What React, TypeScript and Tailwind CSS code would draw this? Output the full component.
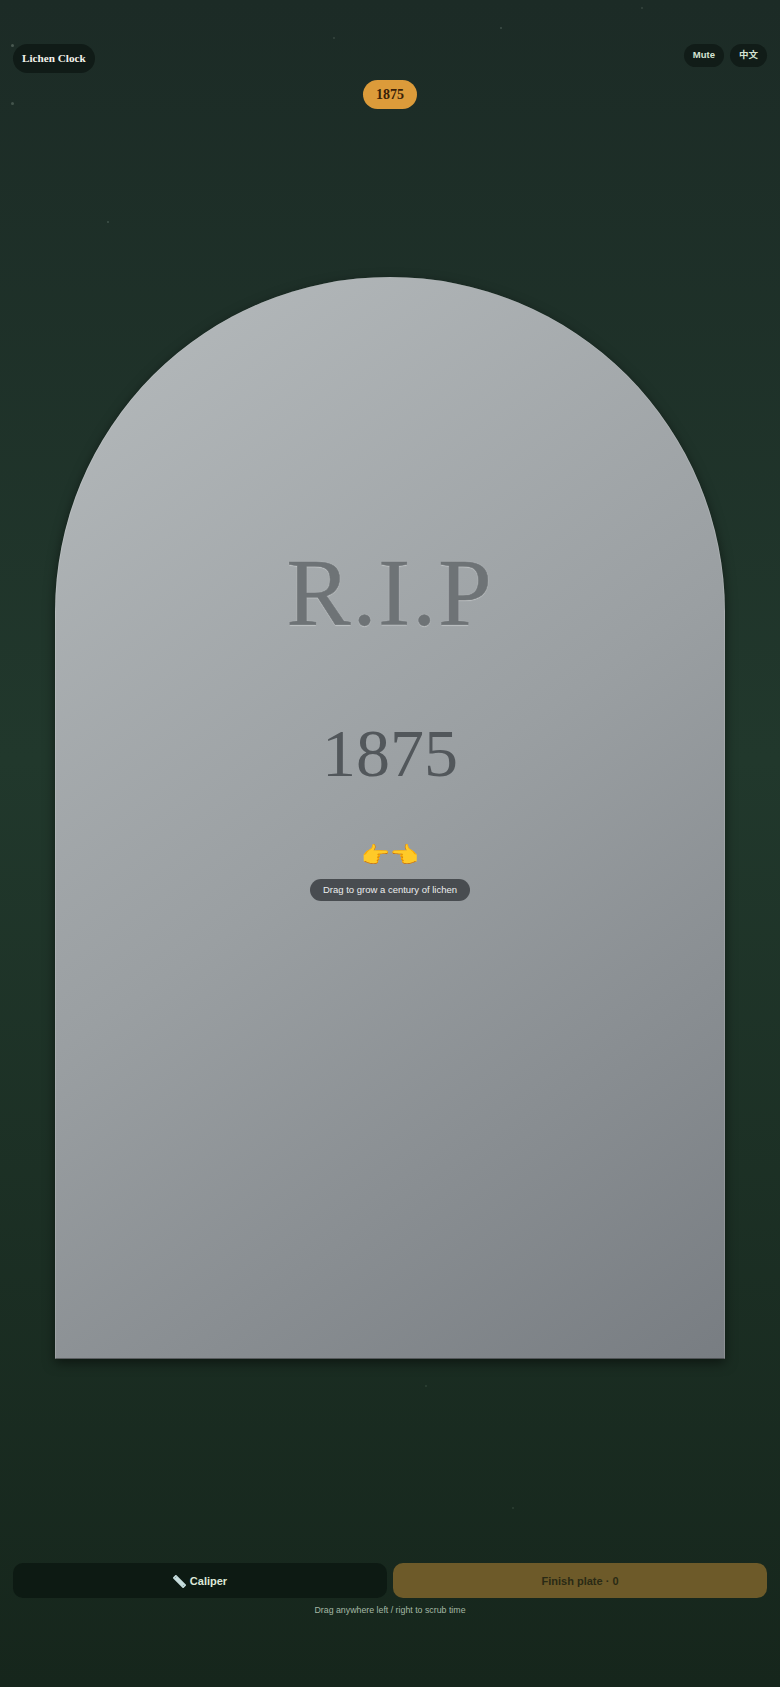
const specks = [
  { x: 11, y: 44, s: 3, o: 0.25 },
  { x: 11, y: 102, s: 3, o: 0.22 },
  { x: 107, y: 221, s: 2, o: 0.2 },
  { x: 333, y: 37, s: 2, o: 0.15 },
  { x: 500, y: 27, s: 2, o: 0.2 },
  { x: 641, y: 7, s: 2, o: 0.15 },
  { x: 425, y: 1385, s: 2, o: 0.12 },
  { x: 512, y: 1507, s: 2, o: 0.12 },
];

export default function App() {
  return (
    <div className="relative flex h-[1687px] w-[780px] flex-col overflow-hidden bg-[linear-gradient(180deg,#1c2b26_0%,#21382c_45%,#16261c_100%)] font-['Liberation_Sans',sans-serif]">
      {specks.map((d) => (
        <span
          key={`${d.x}-${d.y}`}
          className="absolute rounded-full bg-[#cfe0d0]"
          style={{ left: d.x, top: d.y, width: d.s, height: d.s, opacity: d.o }}
        />
      ))}

      <header className="flex items-start justify-between px-[13px] pt-[44px]">
        <div className="flex h-[29px] items-center rounded-full bg-[#101b17] px-[9px] font-['Liberation_Serif',serif] text-[11.2px] font-bold text-[#f2f2ea]">
          Lichen Clock
        </div>
        <div className="flex gap-[6px]">
          <button className="flex h-[23px] items-center rounded-full bg-[#111c18] px-[9px] text-[9.5px] font-bold text-[#d5e3d3]">
            Mute
          </button>
          <button className="flex h-[23px] items-center rounded-full bg-[#111c18] px-[9px] font-['Liberation_Sans','Noto_Sans_CJK_SC',sans-serif] text-[9.5px] font-bold text-[#d5e3d3]">
            中文
          </button>
        </div>
      </header>

      <div className="mt-[7px] flex justify-center">
        <div className="flex h-[29px] w-[54px] items-center justify-center rounded-full bg-[#dc9b3a] font-['Liberation_Serif',serif] text-[14px] font-bold text-[#3a2208]">
          1875
        </div>
      </div>

      <main className="mx-[55px] mt-[168px] flex h-[1082px] flex-col items-center rounded-t-[335px] bg-[linear-gradient(145deg,#b6bbbd_0%,#9a9fa2_50%,#787d82_100%)] shadow-[0_4px_12px_rgba(0,0,0,0.5),inset_1px_0_0_rgba(255,255,255,0.15),inset_-1px_0_0_rgba(255,255,255,0.15),inset_0_-1px_0_rgba(0,0,0,0.35)]">
        <div className="mt-[261px] font-['Liberation_Serif',serif] text-[96px] leading-[110px] tracking-[0.02em] text-[#6e7376] [-webkit-text-stroke:0.5px_#6e7376] [text-shadow:0_1px_1px_rgba(255,255,255,0.35),0_0_2px_rgba(255,255,255,0.25)]">
          R.I.P
        </div>
        <div className="mt-[66px] font-['Liberation_Serif',serif] text-[68px] leading-[78px] text-[#52575b]">
          1875
        </div>
        <div className="mt-[49px] font-['Noto_Color_Emoji',sans-serif] text-[23px] leading-[30px]">
          👉👈
        </div>
        <div className="mt-[8px] flex h-[22px] items-center rounded-full bg-[#484c50] px-[12.5px] text-[9.5px] text-[#eceeee]">
          Drag to grow a century of lichen
        </div>
      </main>

      <footer className="mt-[204px] flex flex-col px-[13px]">
        <div className="flex gap-[6px]">
          <button className="flex h-[35px] flex-1 items-center justify-center gap-[4px] rounded-[10px] bg-[#0d1a13] pt-[1px] text-[11px] font-bold text-[#dde8d8]">
            <svg viewBox="0 0 14 14" className="h-[13px] w-[13px]">
              <rect x="4.5" y="-1" width="5" height="16" rx="0.5" transform="rotate(-45 7 7)" fill="#c6dcdc" />
              <path d="M3.6 1.8 L2 3.4 M12 10.6 L10.6 12" stroke="#7fa3a8" strokeWidth="1" />
            </svg>
            Caliper
          </button>
          <button className="h-[35px] flex-1 rounded-[10px] bg-[#6d5a29] pt-[1px] text-[11px] font-bold text-[#2a2a15]">
            Finish plate · 0
          </button>
        </div>
        <p className="mt-[6px] text-center text-[8.8px] text-[#a5b8a5]">
          Drag anywhere left / right to scrub time
        </p>
      </footer>
    </div>
  );
}
